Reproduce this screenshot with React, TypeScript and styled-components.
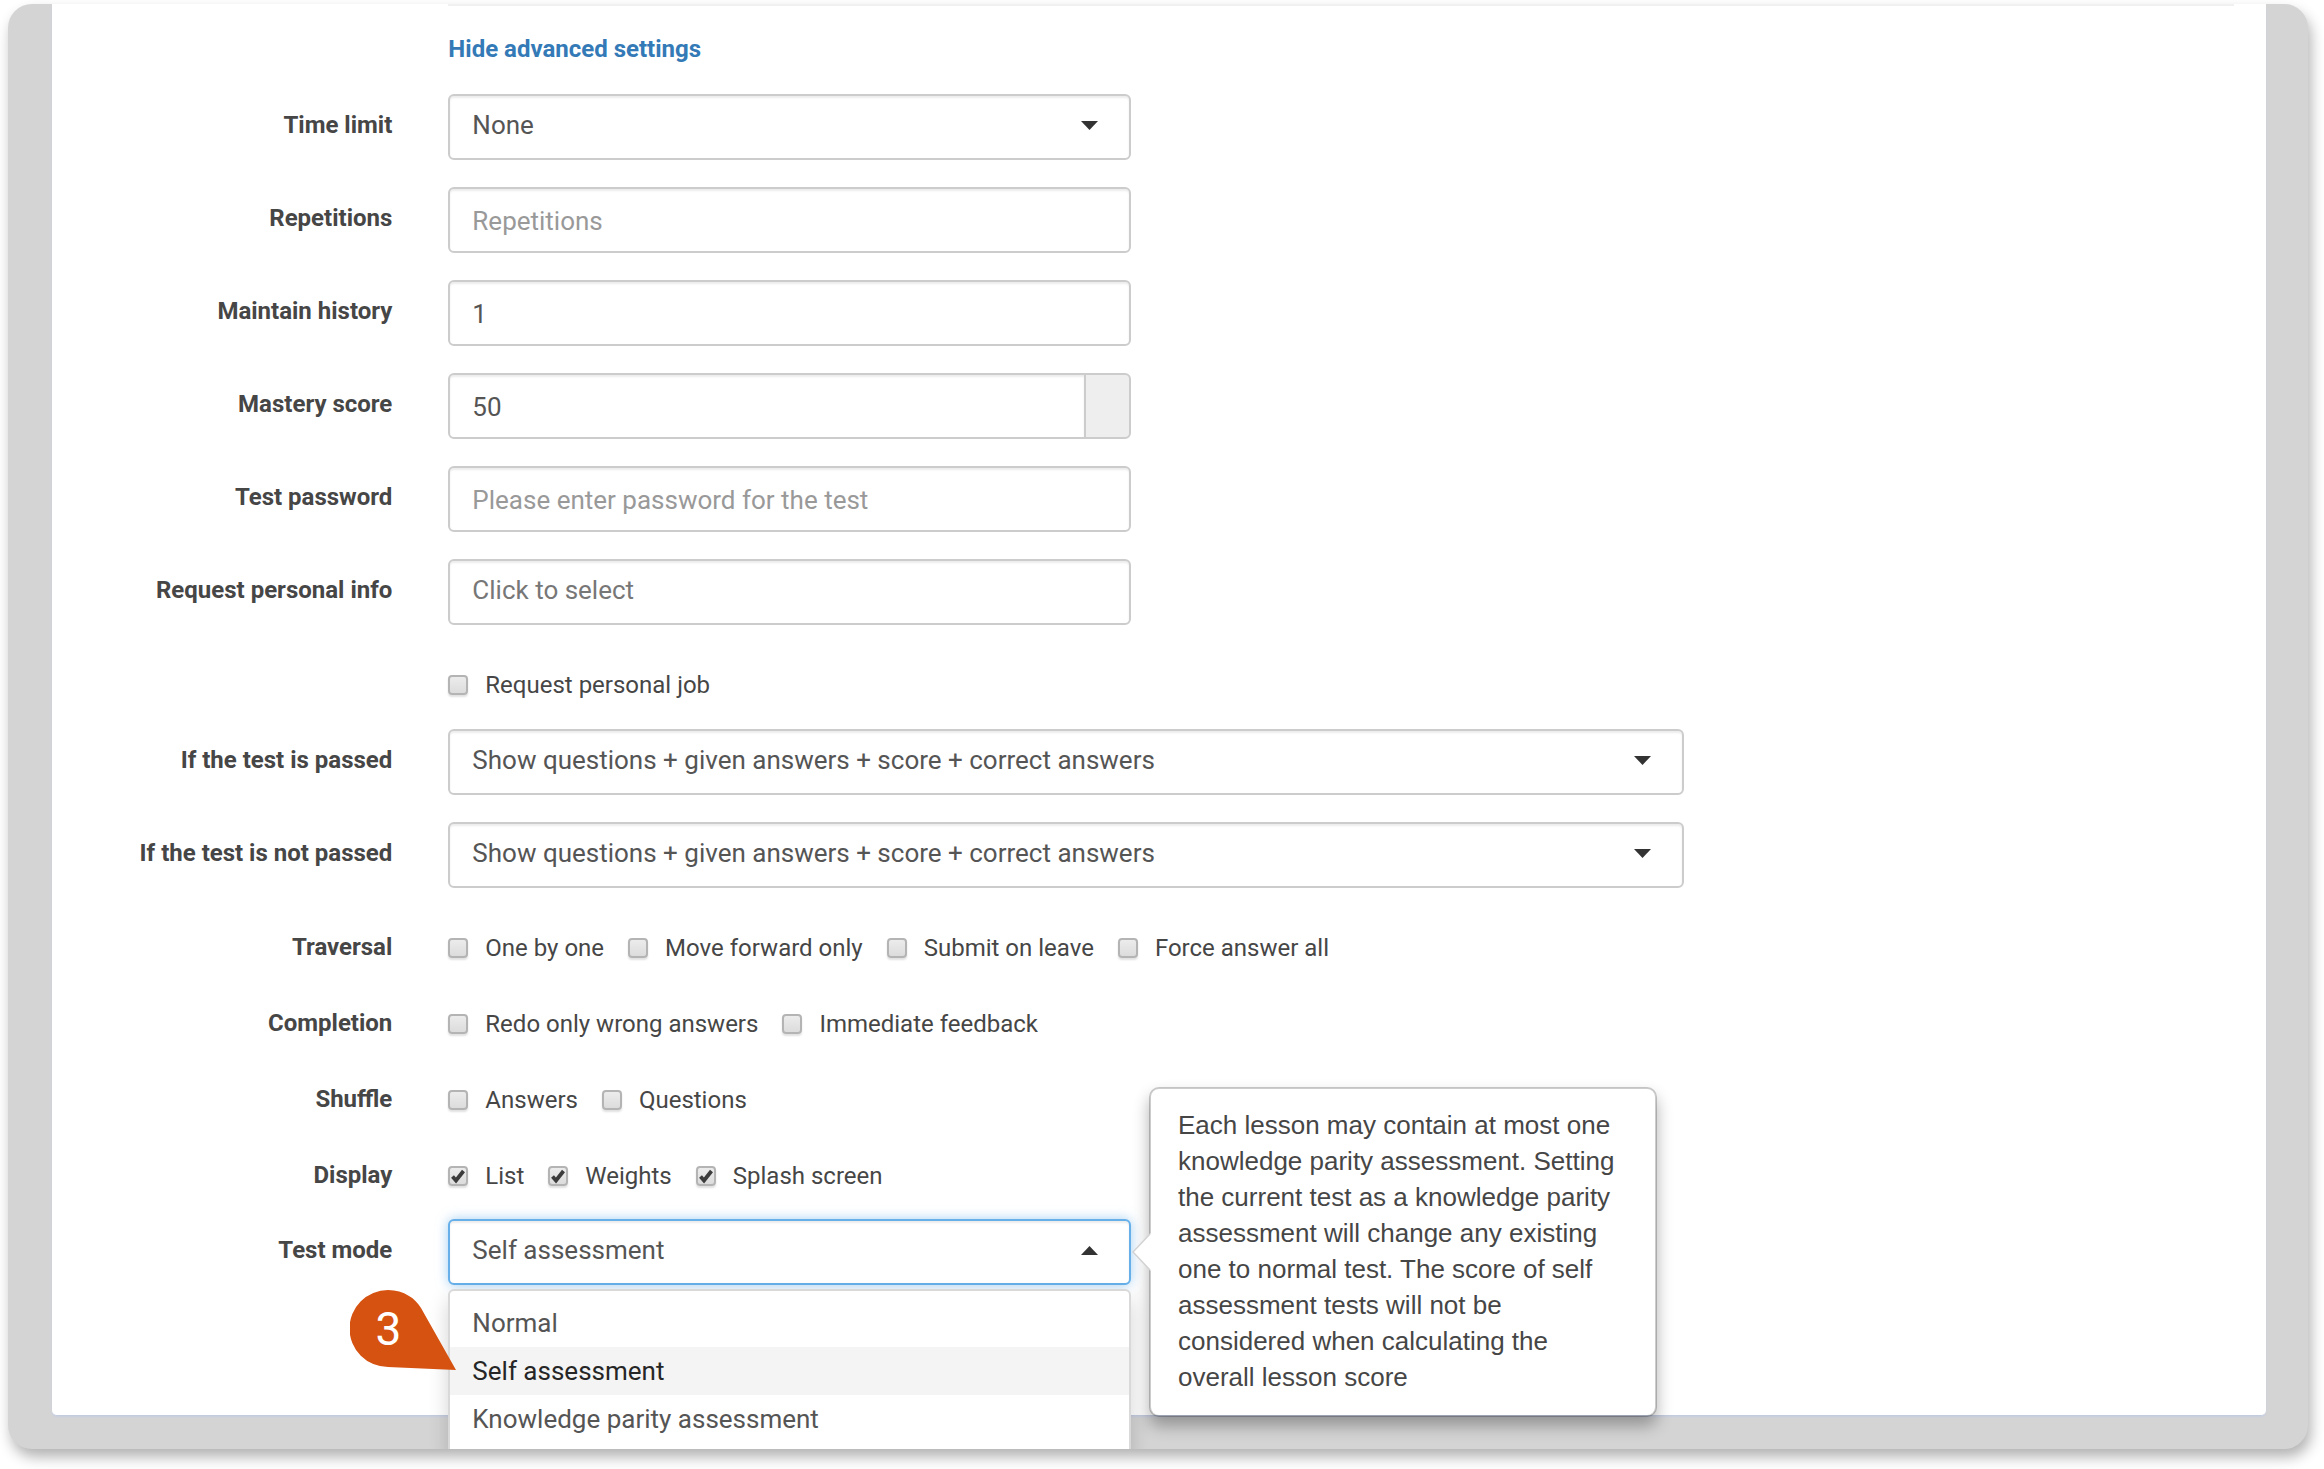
import React, { useState } from "react";
import styled, { createGlobalStyle, css } from "styled-components";

const GlobalStyle = createGlobalStyle`
  *, *::before, *::after { box-sizing: border-box; }
  body {
    margin: 0;
    background: #fff;
    color: #464646;
    font-family: Roboto, "Liberation Sans", sans-serif;
    font-size: 24px;
    line-height: 32px;
  }
  button, input, select { font: inherit; color: inherit; }
`;

const Page = styled.div`
  padding: 4px 16px 20px 8px;
`;

const Frame = styled.div`
  overflow: hidden;
  padding: 0 42px 33px 44px;
  border-radius: 24px;
  background: #d4d4d4;
  box-shadow: 3px 8px 14px rgba(0, 0, 0, 0.3);
`;

const Panel = styled.main`
  padding: 0 4px 130px 0;
  background: #fff;
  border-bottom: 1px solid #c3cbdf;
  border-radius: 0 0 5px 5px;
  box-shadow: 0 1px 2px #c8cee0;
`;

const Form = styled.form`
  display: flex;
  flex-direction: column;
  gap: 27px;
`;

const Row = styled.div`
  display: grid;
  grid-template-columns: repeat(12, minmax(0, 1fr));
`;

const CheckRow = styled(Row)`
  min-height: 49px;
  padding-top: 1px;
`;

const SoloCheckRow = styled(CheckRow)`
  min-height: 50px;
`;

const RowLabel = styled.label`
  grid-column: 1 / span 2;
  padding: 15px 28px 0 0;
  text-align: right;
  white-space: nowrap;
  font-weight: 700;
`;

const Field = styled.div<{ $span: number }>`
  grid-column: 3 / span ${(p) => p.$span};
  padding: 0 26px 0 28px;
`;

const Separator = styled.hr`
  margin: 0 28px 0 0;
  height: 2px;
  border: 0;
  background: #f0f0f0;
`;

const HeadCell = styled.div`
  grid-column: 3 / -1;
  padding: 0 0 2px 28px;
  display: flex;
  flex-direction: column;
  gap: 27px;
`;

const ToggleLink = styled.a`
  align-self: flex-start;
  color: #337ab7;
  font-weight: 700;
  text-decoration: none;
`;

const controlBox = css`
  display: block;
  width: 100%;
  height: 66px;
  margin: 0;
  padding: 0 22px;
  border: 2px solid #ccc;
  border-radius: 6px;
  background: #fff;
  box-shadow: inset 0 2px 2px rgba(0, 0, 0, 0.075);
  color: #555;
  font-size: 26px;
  outline: none;
`;

const TextInput = styled.input`
  ${controlBox}
  padding-top: 2px;
  &::placeholder { color: #999; opacity: 1; }
`;

const PickInput = styled(TextInput)`
  padding-top: 0;
  padding-bottom: 4px;
  &::placeholder { color: #777; }
`;

const InputGroup = styled.div`
  display: flex;
  ${TextInput} {
    flex: 1;
    border-right-width: 1px;
    border-radius: 6px 0 0 6px;
  }
`;

const Addon = styled.span`
  width: 46px;
  border: 2px solid #ccc;
  border-left-width: 1px;
  border-radius: 0 6px 6px 0;
  background: #eee;
`;

const SelectWrap = styled.div`
  position: relative;
`;

const SelectBox = styled.select<{ $open?: boolean }>`
  ${controlBox}
  appearance: none;
  padding-bottom: 4px;
  ${(p) =>
    p.$open &&
    css`
      border-color: #66afe9;
      box-shadow: inset 0 2px 2px rgba(0, 0, 0, 0.075), 0 0 12px rgba(102, 175, 233, 0.6);
    `}
`;

const Caret = styled.svg<{ $up?: boolean }>`
  position: absolute;
  right: 33px;
  top: 27px;
  width: 17px;
  height: 9px;
  fill: #333;
  pointer-events: none;
  transform: ${(p) => (p.$up ? "rotate(180deg)" : "none")};
`;

const Checks = styled.div`
  grid-column: 3 / -1;
  display: flex;
  flex-wrap: wrap;
  gap: 24px;
  padding: 15px 28px 0;
`;

const CheckLabel = styled.label`
  display: flex;
  align-items: center;
  gap: 17px;
`;

const Tick = styled.span`
  position: relative;
  display: flex;
`;

const TickInput = styled.input`
  appearance: none;
  width: 20px;
  height: 20px;
  margin: 0;
  border: 2px solid #b4b4b4;
  border-radius: 4px;
  background: linear-gradient(#ececec, #dcdcdc);
  box-shadow: 0 2px 2px rgba(0, 0, 0, 0.12);
  & + svg { display: none; }
  &:checked + svg { display: block; }
`;

const TickMark = styled.svg`
  position: absolute;
  inset: 0;
  width: 20px;
  height: 20px;
  pointer-events: none;
`;

const Menu = styled.ul`
  position: absolute;
  z-index: 2;
  top: calc(100% + 4px);
  left: 0;
  right: 0;
  margin: 0;
  padding: 8px 0 9px;
  list-style: none;
  background: #fff;
  border: 2px solid #d9d9d9;
  border-radius: 6px;
  box-shadow: 0 10px 20px rgba(0, 0, 0, 0.175);
`;

const MenuItem = styled.button<{ $active: boolean }>`
  display: block;
  width: 100%;
  height: 48px;
  padding: 0 22px;
  border: 0;
  text-align: left;
  font-size: 26px;
  background: ${(p) => (p.$active ? "#f4f4f4" : "transparent")};
  color: ${(p) => (p.$active ? "#262626" : "#555")};
`;

const Popover = styled.aside`
  position: absolute;
  z-index: 1;
  top: -132px;
  left: calc(100% + 18px);
  width: 508px;
  padding: 18px 27px 20px;
  background: #fff;
  border: 2px solid rgba(0, 0, 0, 0.2);
  background-clip: padding-box;
  border-radius: 10px;
  box-shadow: 0 9px 16px rgba(0, 0, 0, 0.3);
  font-family: "Liberation Sans", Arial, sans-serif;
  font-size: 26px;
  line-height: 36px;
`;

const PopoverArrow = styled.svg`
  position: absolute;
  top: 143px;
  left: -19px;
  width: 20px;
  height: 40px;
`;

const Marker = styled.div`
  position: absolute;
  z-index: 3;
  top: 71px;
  left: -98px;
  width: 106px;
  height: 80px;
  color: #fff;
`;

const MarkerShape = styled.svg`
  position: absolute;
  inset: 0;
  width: 106px;
  height: 80px;
`;

const MarkerNumber = styled.span`
  position: relative;
  display: block;
  width: 76px;
  text-align: center;
  font-size: 46px;
  line-height: 78px;
`;

const answersOption = "Show questions + given answers + score + correct answers";
const testModes = ["Normal", "Self assessment", "Knowledge parity assessment"];

const checkGroups: { label: string; items: [string, boolean][] }[] = [
  {
    label: "Traversal",
    items: [
      ["One by one", false],
      ["Move forward only", false],
      ["Submit on leave", false],
      ["Force answer all", false],
    ],
  },
  { label: "Completion", items: [["Redo only wrong answers", false], ["Immediate feedback", false]] },
  { label: "Shuffle", items: [["Answers", false], ["Questions", false]] },
  { label: "Display", items: [["List", true], ["Weights", true], ["Splash screen", true]] },
];

function CaretIcon({ up }: { up?: boolean }) {
  return (
    <Caret $up={up} viewBox="0 0 17 9" aria-hidden="true">
      <path d="M0 0H17L8.5 9Z" />
    </Caret>
  );
}

function Check({ text, checked }: { text: string; checked?: boolean }) {
  return (
    <CheckLabel>
      <Tick>
        <TickInput type="checkbox" defaultChecked={checked} />
        <TickMark viewBox="0 0 20 20" aria-hidden="true">
          <path d="M4.5 10.5L8 14.5L15.5 5" fill="none" stroke="#3c3c3c" strokeWidth="3.8" />
        </TickMark>
      </Tick>
      {text}
    </CheckLabel>
  );
}

function SelectRow({ id, label, option, span }: { id: string; label: string; option: string; span: number }) {
  return (
    <Row>
      <RowLabel htmlFor={id}>{label}</RowLabel>
      <Field $span={span}>
        <SelectWrap>
          <SelectBox id={id}>
            <option>{option}</option>
          </SelectBox>
          <CaretIcon />
        </SelectWrap>
      </Field>
    </Row>
  );
}

export default function App() {
  const [mode, setMode] = useState("Self assessment");

  return (
    <Page>
      <GlobalStyle />
      <Frame>
        <Panel>
          <Form onSubmit={(e) => e.preventDefault()}>
            <Row>
              <HeadCell>
                <Separator />
                <ToggleLink href="#advanced">Hide advanced settings</ToggleLink>
              </HeadCell>
            </Row>

            <SelectRow id="time-limit" label="Time limit" option="None" span={4} />
            <Row>
              <RowLabel htmlFor="repetitions">Repetitions</RowLabel>
              <Field $span={4}>
                <TextInput id="repetitions" placeholder="Repetitions" />
              </Field>
            </Row>
            <Row>
              <RowLabel htmlFor="history">Maintain history</RowLabel>
              <Field $span={4}>
                <TextInput id="history" defaultValue="1" />
              </Field>
            </Row>
            <Row>
              <RowLabel htmlFor="mastery">Mastery score</RowLabel>
              <Field $span={4}>
                <InputGroup>
                  <TextInput id="mastery" defaultValue="50" />
                  <Addon />
                </InputGroup>
              </Field>
            </Row>
            <Row>
              <RowLabel htmlFor="password">Test password</RowLabel>
              <Field $span={4}>
                <TextInput id="password" placeholder="Please enter password for the test" />
              </Field>
            </Row>
            <Row>
              <RowLabel htmlFor="personal">Request personal info</RowLabel>
              <Field $span={4}>
                <PickInput id="personal" placeholder="Click to select" />
              </Field>
            </Row>
            <SoloCheckRow>
              <Checks>
                <Check text="Request personal job" />
              </Checks>
            </SoloCheckRow>

            <SelectRow id="passed" label="If the test is passed" option={answersOption} span={7} />
            <SelectRow id="not-passed" label="If the test is not passed" option={answersOption} span={7} />

            {checkGroups.map((group) => (
              <CheckRow key={group.label} role="group" aria-label={group.label}>
                <RowLabel as="span">{group.label}</RowLabel>
                <Checks>
                  {group.items.map(([text, checked]) => (
                    <Check key={text} text={text} checked={checked} />
                  ))}
                </Checks>
              </CheckRow>
            ))}

            <Row>
              <RowLabel htmlFor="mode">Test mode</RowLabel>
              <Field $span={4}>
                <SelectWrap>
                  <SelectBox id="mode" $open value={mode} onChange={(e) => setMode(e.target.value)}>
                    {testModes.map((m) => (
                      <option key={m}>{m}</option>
                    ))}
                  </SelectBox>
                  <CaretIcon up />
                  <Popover>
                    <PopoverArrow viewBox="0 0 20 40" aria-hidden="true">
                      <path d="M20 0L1 20L20 40Z" fill="#fff" />
                      <path d="M18 2L1 20L18 38" fill="none" stroke="#d2d2d2" strokeWidth="1.5" />
                    </PopoverArrow>
                    Each lesson may contain at most one knowledge parity assessment. Setting the current test as a
                    knowledge parity assessment will change any existing one to normal test. The score of self
                    assessment tests will not be considered when calculating the overall lesson score
                  </Popover>
                  <Menu>
                    {testModes.map((m) => (
                      <li key={m}>
                        <MenuItem type="button" $active={m === mode} onClick={() => setMode(m)}>
                          {m}
                        </MenuItem>
                      </li>
                    ))}
                  </Menu>
                  <Marker>
                    <MarkerShape viewBox="0 0 106 80" aria-hidden="true">
                      <path
                        d="M38 0C54 0 66 9 71 18L106 80L38 77A38.5 38.5 0 0 1 38 0Z"
                        fill="#d65211"
                      />
                    </MarkerShape>
                    <MarkerNumber>3</MarkerNumber>
                  </Marker>
                </SelectWrap>
              </Field>
            </Row>
          </Form>
        </Panel>
      </Frame>
    </Page>
  );
}
